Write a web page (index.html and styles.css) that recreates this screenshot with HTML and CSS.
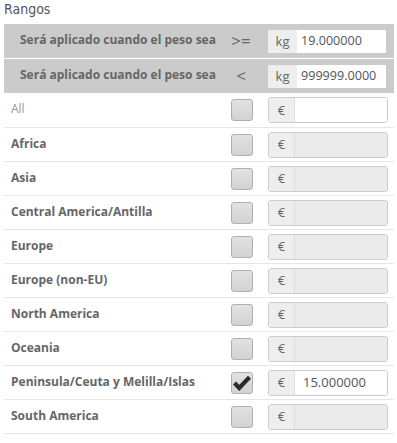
FILE: index.html
```html
<!DOCTYPE html>
<html lang="es">
<head>
  <meta charset="UTF-8">
  <title>Rangos</title>
  <link rel="stylesheet" href="styles.css">
</head>
<body>
  <div class="ranges">
    <div class="ranges-title">Rangos</div>

    <div class="range-head">
      <div class="head-label">Será aplicado cuando el peso sea</div>
      <div class="head-op">&gt;=</div>
      <div class="input-group">
        <span class="addon">kg</span>
        <span class="field">19.000000</span>
      </div>
    </div>
    <div class="range-head">
      <div class="head-label">Será aplicado cuando el peso sea</div>
      <div class="head-op">&lt;</div>
      <div class="input-group">
        <span class="addon">kg</span>
        <span class="field">999999.0000</span>
      </div>
    </div>

    <div class="zone-row all-row">
      <div class="zone-name all">All</div>
      <div class="zone-check"><span class="checkbox"></span></div>
      <div class="input-group">
        <span class="addon">€</span>
        <span class="field"></span>
      </div>
    </div>
    <div class="zone-row">
      <div class="zone-name">Africa</div>
      <div class="zone-check"><span class="checkbox"></span></div>
      <div class="input-group disabled">
        <span class="addon">€</span>
        <span class="field"></span>
      </div>
    </div>
    <div class="zone-row">
      <div class="zone-name">Asia</div>
      <div class="zone-check"><span class="checkbox"></span></div>
      <div class="input-group disabled">
        <span class="addon">€</span>
        <span class="field"></span>
      </div>
    </div>
    <div class="zone-row">
      <div class="zone-name">Central America/Antilla</div>
      <div class="zone-check"><span class="checkbox"></span></div>
      <div class="input-group disabled">
        <span class="addon">€</span>
        <span class="field"></span>
      </div>
    </div>
    <div class="zone-row">
      <div class="zone-name">Europe</div>
      <div class="zone-check"><span class="checkbox"></span></div>
      <div class="input-group disabled">
        <span class="addon">€</span>
        <span class="field"></span>
      </div>
    </div>
    <div class="zone-row">
      <div class="zone-name">Europe (non-EU)</div>
      <div class="zone-check"><span class="checkbox"></span></div>
      <div class="input-group disabled">
        <span class="addon">€</span>
        <span class="field"></span>
      </div>
    </div>
    <div class="zone-row">
      <div class="zone-name">North America</div>
      <div class="zone-check"><span class="checkbox"></span></div>
      <div class="input-group disabled">
        <span class="addon">€</span>
        <span class="field"></span>
      </div>
    </div>
    <div class="zone-row">
      <div class="zone-name">Oceania</div>
      <div class="zone-check"><span class="checkbox"></span></div>
      <div class="input-group disabled">
        <span class="addon">€</span>
        <span class="field"></span>
      </div>
    </div>
    <div class="zone-row">
      <div class="zone-name">Peninsula/Ceuta y Melilla/Islas</div>
      <div class="zone-check">
        <span class="checkbox">
          <svg width="18" height="16" viewBox="0 0 18 16"><path d="M1.5 8 L6.2 13 L16.5 2.2" fill="none" stroke="#2a2a2a" stroke-width="4.2" stroke-linejoin="miter"/></svg>
        </span>
      </div>
      <div class="input-group">
        <span class="addon">€</span>
        <span class="field">15.000000</span>
      </div>
    </div>
    <div class="zone-row">
      <div class="zone-name">South America</div>
      <div class="zone-check"><span class="checkbox"></span></div>
      <div class="input-group disabled">
        <span class="addon">€</span>
        <span class="field"></span>
      </div>
    </div>
  </div>
</body>
</html>
```

FILE: styles.css
```css
body {
  margin: 0;
  background: #fff;
  font-family: "Open Sans", sans-serif;
  font-size: 12px;
  color: #666;
}

.ranges {
  width: 390px;
  margin-left: 4px;
}

.ranges-title {
  font-family: "Liberation Sans Narrow", "DejaVu Sans Condensed", "Open Sans", sans-serif;
  font-size: 14px;
  line-height: 18px;
  height: 24px;
  color: #555;
}

.range-head {
  display: flex;
  align-items: center;
  height: 34px;
  background: #cbcbcb;
}

.range-head + .range-head {
  margin-top: 1px;
}

.head-label {
  flex: 1;
  padding-left: 16px;
  padding-bottom: 3px;
  font-weight: bold;
  color: #666;
}

.head-op {
  width: 40px;
  padding-bottom: 2px;
  text-align: center;
  font-size: 17px;
  color: #666;
  margin-right: 6px;
}

.input-group {
  display: flex;
  width: 120px;
  height: 26px;
  margin-right: 6px;
  box-sizing: border-box;
  border: 1px solid #ccc;
  border-radius: 3px;
  overflow: hidden;
  font-size: 13px;
}

.range-head .input-group {
  border-color: #cbcbcb;
  height: 25px;
  border-radius: 2px;
  margin-right: 7px;
}

.addon {
  width: 25px;
  display: flex;
  align-items: center;
  justify-content: center;
  padding-bottom: 1px;
  background: #eee;
  color: #666;
  border-right: 1px solid #ddd;
}

.range-head .addon {
  width: 29px;
  border-right: none;
}

.field {
  flex: 1;
  display: flex;
  align-items: center;
  padding-left: 8px;
  padding-bottom: 1px;
  background: #fff;
  color: #555;
}

.range-head .field {
  padding-left: 4px;
  font-size: 12.6px;
}

.disabled .field {
  background: #ebebeb;
}

.zone-row {
  display: flex;
  align-items: center;
  height: 33px;
  border-bottom: 1px solid #e6e6e6;
}

.zone-row.all-row {
  height: 34px;
}

.zone-name {
  flex: 1;
  padding-left: 7px;
  padding-bottom: 3px;
  font-weight: bold;
  color: #666;
}

.zone-name.all {
  font-weight: normal;
  color: #999;
}

.zone-check {
  width: 40px;
  margin-right: 6px;
  display: flex;
  justify-content: center;
}

.checkbox {
  display: flex;
  align-items: center;
  justify-content: center;
  width: 22px;
  height: 22px;
  box-sizing: border-box;
  border: 1px solid #b0b0b0;
  border-radius: 3px;
  background: linear-gradient(#e2e2e2, #d2d2d2);
}
```
